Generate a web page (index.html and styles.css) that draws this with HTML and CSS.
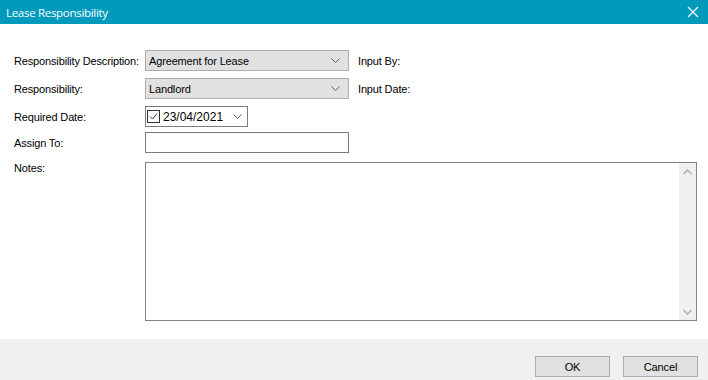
FILE: index.html
```html
<!DOCTYPE html>
<html>
<head>
<meta charset="utf-8">
<link rel="stylesheet" href="styles.css">
</head>
<body>
<div class="dialog">
  <div class="titlebar">
    <span class="title">Lease Responsibility</span>
    <svg class="close" width="12" height="12" viewBox="0 0 12 12"><path d="M1 1 L11 11 M11 1 L1 11" stroke="#fff" stroke-width="1.2" fill="none"/></svg>
  </div>
  <div class="content">
    <div class="row r1">
      <label class="lbl">Responsibility Description:</label>
      <div class="combo"><span>Agreement for Lease</span><svg class="chev" width="9" height="5" viewBox="0 0 9 5"><path d="M0.5 0.5 L4.5 4.5 L8.5 0.5" stroke="#606060" fill="none"/></svg></div>
      <span class="side">Input By:</span>
    </div>
    <div class="row r2">
      <label class="lbl">Responsibility:</label>
      <div class="combo"><span>Landlord</span><svg class="chev" width="9" height="5" viewBox="0 0 9 5"><path d="M0.5 0.5 L4.5 4.5 L8.5 0.5" stroke="#606060" fill="none"/></svg></div>
      <span class="side">Input Date:</span>
    </div>
    <div class="row r3">
      <label class="lbl">Required Date:</label>
      <div class="date">
        <svg class="check" width="13" height="13" viewBox="0 0 13 13"><rect x="0.5" y="0.5" width="12" height="12" fill="#fff" stroke="#333"/><path d="M3 6.5 L5.5 9 L10 3.5" stroke="#333" fill="none"/></svg>
        <span>23/04/2021</span>
        <svg class="chev dchev" width="9" height="5" viewBox="0 0 9 5"><path d="M0.5 0.5 L4.5 4.5 L8.5 0.5" stroke="#606060" fill="none"/></svg>
      </div>
    </div>
    <div class="row r4">
      <label class="lbl">Assign To:</label>
      <div class="textbox"></div>
    </div>
    <div class="row r5">
      <label class="lbl notes-lbl">Notes:</label>
      <div class="notes">
        <div class="scroll">
          <svg width="9" height="6" viewBox="0 0 9 6"><path d="M0.5 5 L4.5 1 L8.5 5" stroke="#b0b0b0" stroke-width="1.5" fill="none"/></svg>
          <svg width="9" height="6" viewBox="0 0 9 6"><path d="M0.5 1 L4.5 5 L8.5 1" stroke="#b0b0b0" stroke-width="1.5" fill="none"/></svg>
        </div>
      </div>
    </div>
  </div>
  <div class="footer">
    <button class="btn">OK</button>
    <button class="btn">Cancel</button>
  </div>
</div>
</body>
</html>
```
FILE: styles.css
```css
html, body { margin: 0; padding: 0; }
body { width: 708px; height: 380px; overflow: hidden; background: #fff; font-family: "Liberation Sans", Arial, sans-serif; font-size: 11px; color: #000; }
.dialog { width: 708px; height: 380px; display: flex; flex-direction: column; }
.titlebar { height: 24px; background: #009abd; display: flex; align-items: center; justify-content: space-between; padding: 0 9px 0 6px; }
.title { color: #fff; font-family: "Open Sans", "Noto Sans", sans-serif; font-size: 11.5px; letter-spacing: -0.3px; }
.close { display: block; }
.content { flex: 1; padding: 26px 0 0 14px; display: flex; flex-direction: column; letter-spacing: -0.15px; }
.row { display: flex; align-items: center; }
.lbl { width: 131px; flex: none; }
.r2, .r3 { margin-top: 7px; }
.r4 { margin-top: 5px; }
.r5 { margin-top: 9px; align-items: flex-start; }
.combo { height: 19px; border: 1px solid #adadad; background: #e1e1e1; display: flex; align-items: center; justify-content: space-between; padding: 0 8px 0 3px; box-sizing: content-box; width: 191px; }
.side { margin-left: 9px; }
.date { width: 100px; height: 19px; border: 1px solid #7a7a7a; display: flex; align-items: center; padding-left: 1px; }
.check { margin-right: 3px; }
.dchev { margin-left: 10px; }
.date span { font-size: 12px; letter-spacing: 0; }
.textbox { width: 202px; height: 19px; border: 1px solid #7a7a7a; }
.notes { width: 550px; height: 157px; border: 1px solid #828282; display: flex; justify-content: flex-end; }
.scroll { width: 17px; height: 100%; background: #f0f0f0; display: flex; flex-direction: column; justify-content: space-between; align-items: center; padding: 6px 0 5px; box-sizing: border-box; }
.scroll svg { display: block; }
.footer { height: 41px; background: #f0f0f0; display: flex; justify-content: flex-end; align-items: flex-start; padding: 17px 10px 0 0; box-sizing: border-box; gap: 13px; }
.btn { width: 75px; height: 21px; border: 1px solid #adadad; background: #e1e1e1; font-family: "Liberation Sans", Arial, sans-serif; font-size: 11px; color: #000; padding: 0; margin: 0; letter-spacing: -0.15px; }
```
